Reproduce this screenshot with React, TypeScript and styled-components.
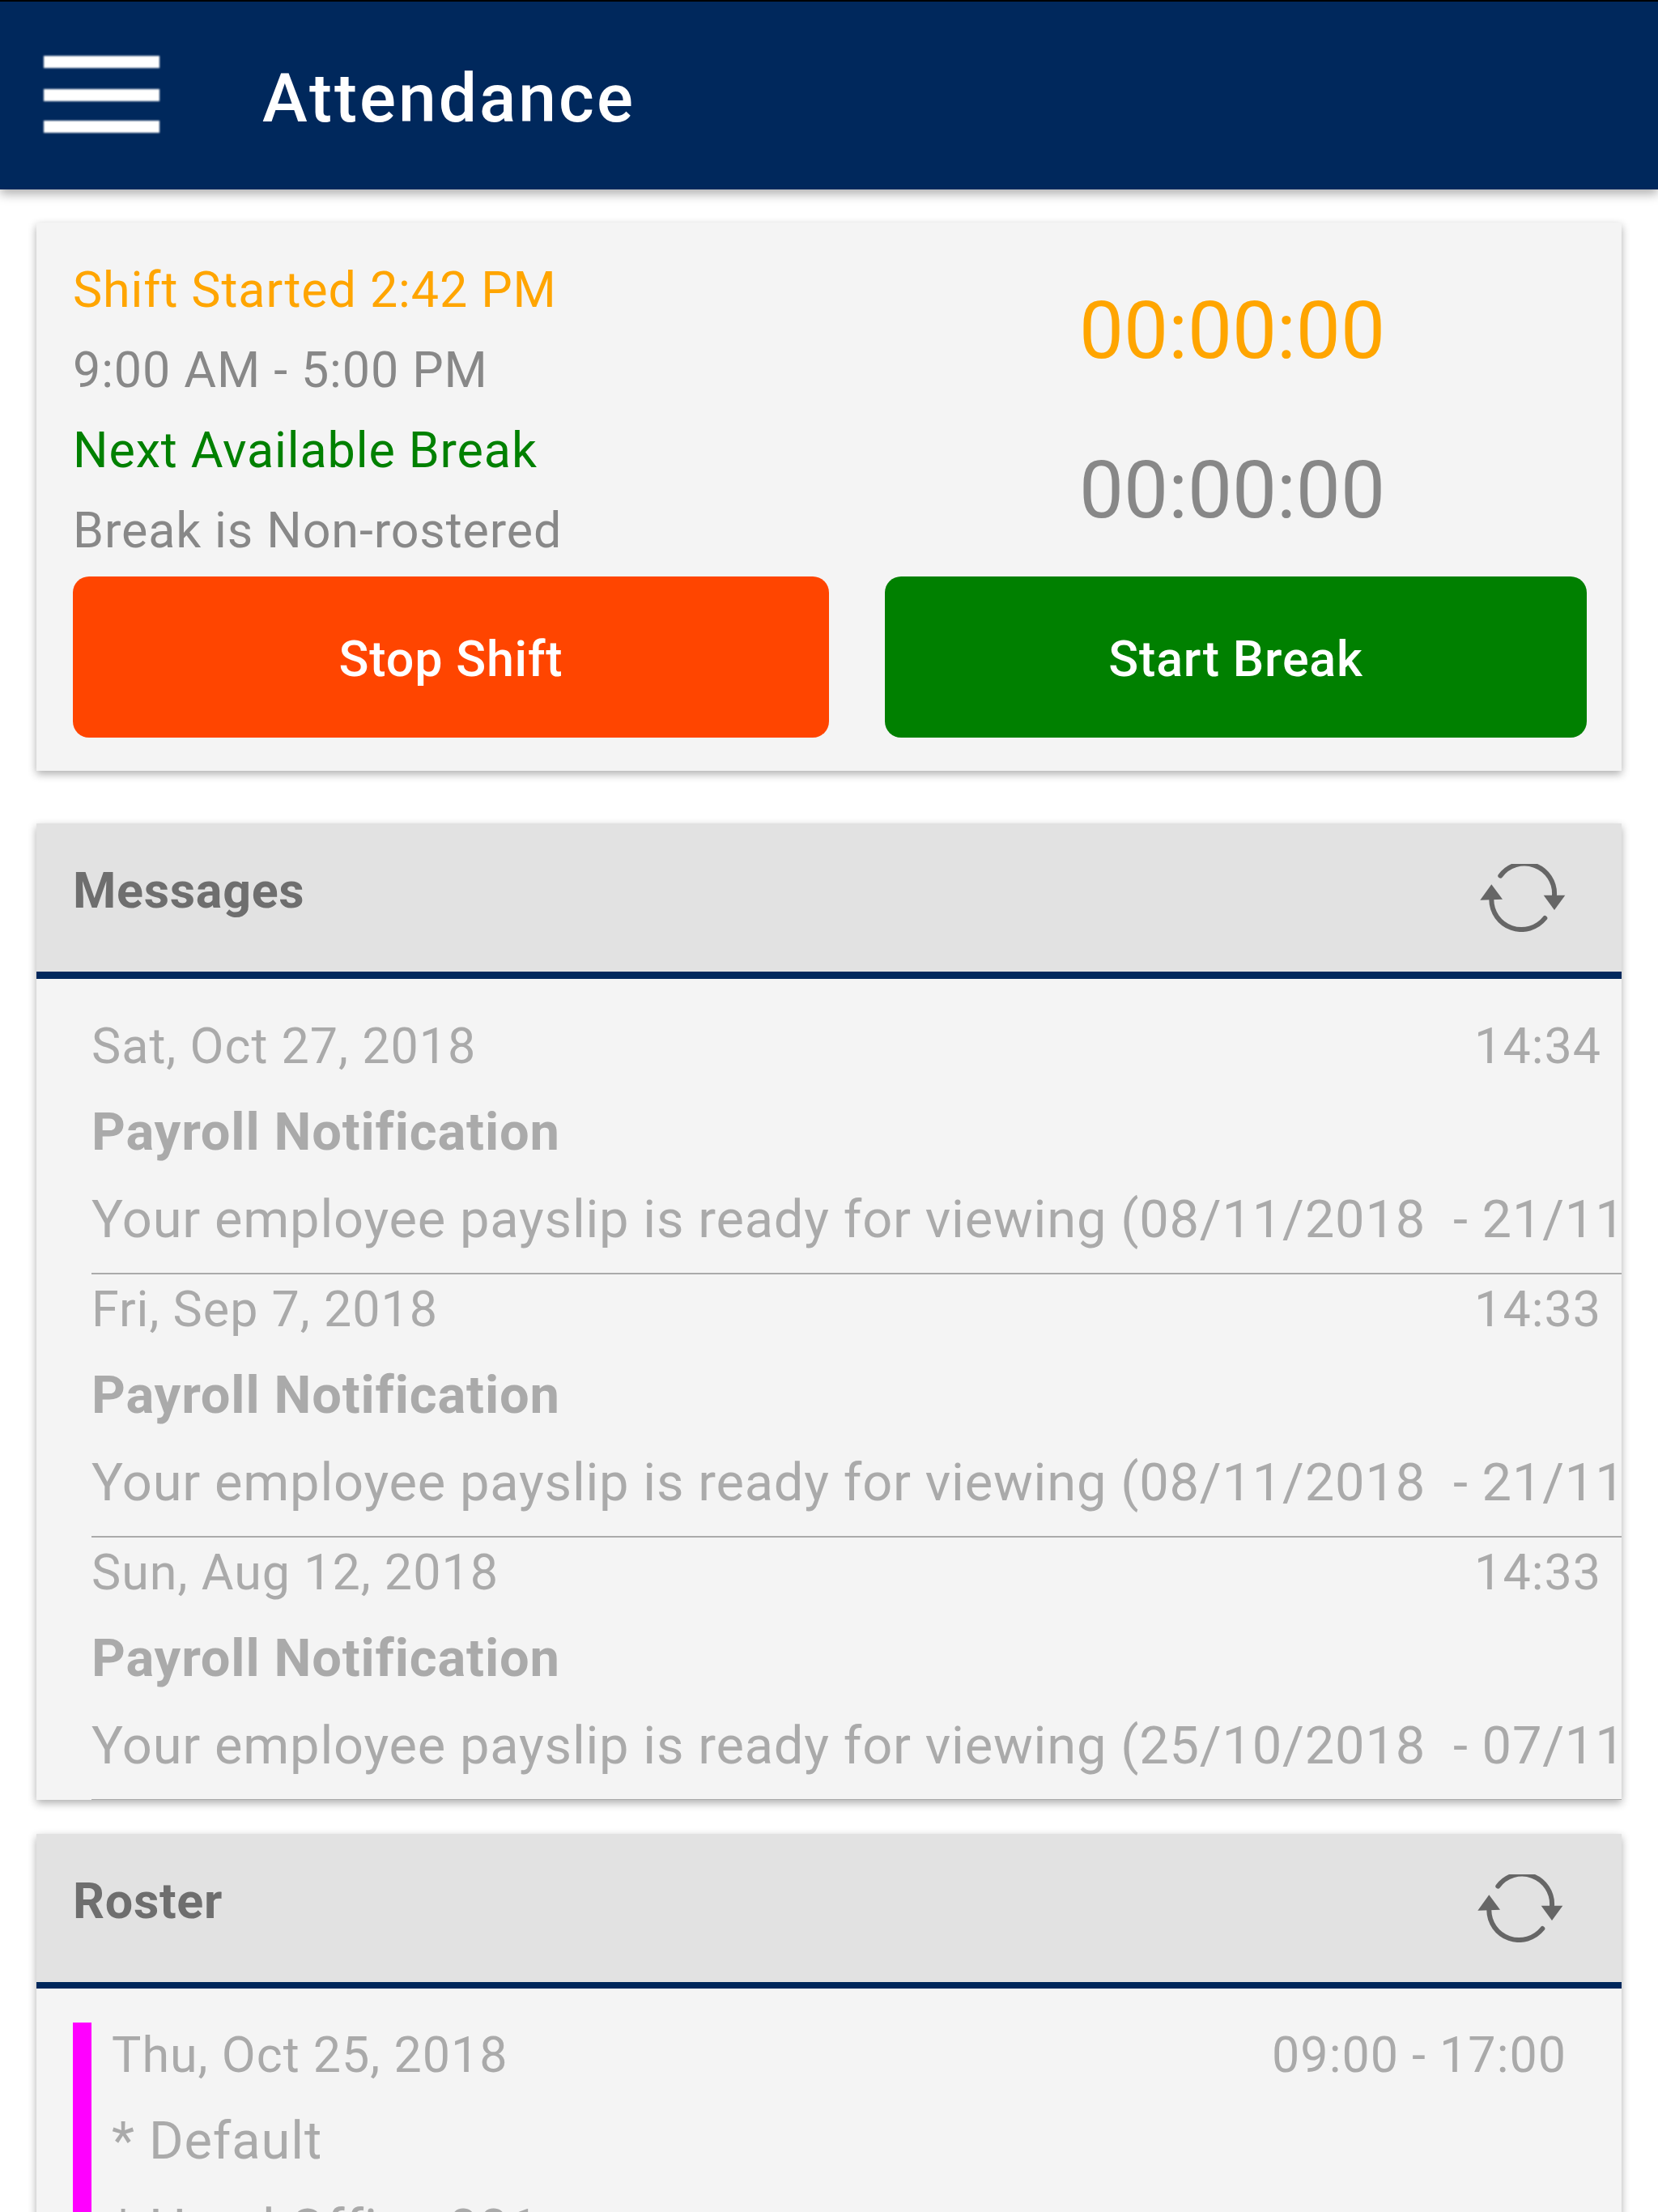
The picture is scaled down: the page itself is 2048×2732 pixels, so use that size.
import styled, { createGlobalStyle } from 'styled-components';

const GlobalStyle = createGlobalStyle`
  html, body {
    margin: 0;
    padding: 0;
    background: #fff;
    font-family: Roboto, "Liberation Sans", sans-serif;
  }
`;

const Page = styled.div`
  width: 2048px;
  height: 2732px;
  overflow: hidden;
  background: #fff;
`;

const TopBar = styled.header`
  height: 232px;
  border-top: 2px solid #000;
  background: #00285c;
  display: flex;
  align-items: center;
  padding-left: 54px;
  box-shadow: 0 6px 12px rgba(0, 0, 0, 0.3);
`;

const MenuIcon = styled.svg`
  width: 143px;
  height: 97px;
  margin-right: 127px;
  margin-top: -3px;
  filter: blur(1.2px);
`;

const Title = styled.h1`
  margin: 7px 0 0;
  font-size: 84px;
  font-weight: 500;
  letter-spacing: 3px;
  color: #fff;
`;

const Card = styled.section<{ $top: number; $height: number }>`
  margin: ${(p) => p.$top}px 45px 0;
  height: ${(p) => p.$height}px;
  background: #f4f4f4;
  box-shadow: 0 4px 10px rgba(0, 0, 0, 0.32);
  overflow: hidden;
`;

const ShiftGrid = styled.div`
  display: grid;
  grid-template-columns: 934px 867px;
  column-gap: 69px;
  padding: 0 0 0 45px;
`;

const StatusList = styled.div`
  padding-top: 34px;
`;

const StatusLine = styled.div<{ $color: string }>`
  font-size: 61px;
  letter-spacing: 0.9px;
  line-height: 99px;
  color: ${(p) => p.$color};
`;

const Timers = styled.div`
  height: 437px;
  box-sizing: border-box;
  padding-top: 35px;
  text-align: center;
  margin-left: -9px;
`;

const Timer = styled.div<{ $color: string }>`
  font-size: 98px;
  line-height: 197px;
  height: 197px;
  color: ${(p) => p.$color};
`;

const ActionButton = styled.button<{ $bg: string }>`
  height: 199px;
  border: 0;
  border-radius: 20px;
  padding-top: 5px;
  background: ${(p) => p.$bg};
  color: #fff;
  font-family: inherit;
  font-size: 61px;
  font-weight: 500;
  letter-spacing: 0.8px;
`;

const PanelHead = styled.div<{ $line: number; $iconGap: number }>`
  height: 183px;
  background: #e2e2e2;
  border-bottom: ${(p) => p.$line}px solid #00285c;
  display: flex;
  align-items: center;
  justify-content: space-between;
  padding: 0 ${(p) => p.$iconGap}px 0 45px;
`;

const PanelTitle = styled.h2`
  margin: -17px 0 0;
  font-size: 61px;
  font-weight: 700;
  letter-spacing: 0.7px;
  color: #6e6e6e;
`;

const RefreshIcon = styled.svg`
  width: 110px;
  height: 84px;
  filter: blur(0.5px);
`;

const MessageList = styled.div`
  padding: 40px 0 0 68px;
`;

const Message = styled.article`
  height: 323px;
  border-bottom: 2px solid #aaa;
`;

const RowTop = styled.div`
  display: flex;
  justify-content: space-between;
  padding-right: 25px;
  font-size: 61px;
  letter-spacing: 1px;
  line-height: 86px;
  color: #aaa;
`;

const MessageTitle = styled.div`
  margin-top: 9px;
  font-size: 65px;
  font-weight: 700;
  letter-spacing: 0.85px;
  line-height: 108px;
  color: #aaa;
`;

const MessageBody = styled.div`
  font-size: 65px;
  letter-spacing: 0.8px;
  line-height: 108px;
  color: #aaa;
  white-space: pre;
`;

const RosterRow = styled.div`
  margin: 42px 0 0 45px;
  border-left: 23px solid #f0f;
  padding: 0 43px 0 25px;
  height: 400px;
`;

const RosterDate = styled(RowTop)`
  line-height: 80px;
  margin-bottom: 12px;
`;

const RosterLine = styled.div`
  font-size: 65px;
  letter-spacing: 0.9px;
  line-height: 108px;
  color: #aaa;
`;

const messages = [
  { date: 'Sat, Oct 27, 2018', time: '14:34', range: '(08/11/2018  - 21/11' },
  { date: 'Fri, Sep 7, 2018', time: '14:33', range: '(08/11/2018  - 21/11' },
  { date: 'Sun, Aug 12, 2018', time: '14:33', range: '(25/10/2018  - 07/11' },
];

const Refresh = () => (
  <RefreshIcon viewBox="0 0 110 84">
    <g fill="none" stroke="#666" strokeWidth="6" strokeLinecap="round">
      <path d="M27.3 14.7A37 37 0 0 1 94 39" />
      <path d="M82.3 67A37 37 0 0 1 16.3 44" />
    </g>
    <path fill="#666" d="M80.7 38.7H107.3L94 57Z" />
    <path fill="#666" d="M2.3 44.7L30 43.7L16.3 25.3Z" />
  </RefreshIcon>
);

const App = () => {
  return (
    <Page>
      <GlobalStyle />
      <TopBar>
        <MenuIcon viewBox="0 0 143 97">
          <rect y="1" width="143" height="15" fill="#fff" />
          <rect y="42" width="143" height="15" fill="#fff" />
          <rect y="81" width="143" height="15" fill="#fff" />
        </MenuIcon>
        <Title>Attendance</Title>
      </TopBar>

      <Card $top={41} $height={677}>
        <ShiftGrid>
          <StatusList>
            <StatusLine $color="#ffa500">Shift Started 2:42 PM</StatusLine>
            <StatusLine $color="#888">9:00 AM - 5:00 PM</StatusLine>
            <StatusLine $color="#008000">Next Available Break</StatusLine>
            <StatusLine $color="#888">Break is Non-rostered</StatusLine>
          </StatusList>
          <Timers>
            <Timer $color="#ffa500">00:00:00</Timer>
            <Timer $color="#888">00:00:00</Timer>
          </Timers>
          <ActionButton $bg="#ff4500">Stop Shift</ActionButton>
          <ActionButton $bg="#008000">Start Break</ActionButton>
        </ShiftGrid>
      </Card>

      <Card $top={65} $height={1206}>
        <PanelHead $line={9} $iconGap={67}>
          <PanelTitle>Messages</PanelTitle>
          <Refresh />
        </PanelHead>
        <MessageList>
          {messages.map((m) => (
            <Message key={m.date}>
              <RowTop>
                <span>{m.date}</span>
                <span>{m.time}</span>
              </RowTop>
              <MessageTitle>Payroll Notification</MessageTitle>
              <MessageBody>Your employee payslip is ready for viewing {m.range}</MessageBody>
            </Message>
          ))}
        </MessageList>
      </Card>

      <Card $top={42} $height={480}>
        <PanelHead $line={8} $iconGap={70}>
          <PanelTitle>Roster</PanelTitle>
          <Refresh />
        </PanelHead>
        <RosterRow>
          <RosterDate>
            <span>Thu, Oct 25, 2018</span>
            <span>09:00 - 17:00</span>
          </RosterDate>
          <RosterLine>* Default</RosterLine>
          <RosterLine>* Head Office 001</RosterLine>
        </RosterRow>
      </Card>
    </Page>
  );
};

export default App;
